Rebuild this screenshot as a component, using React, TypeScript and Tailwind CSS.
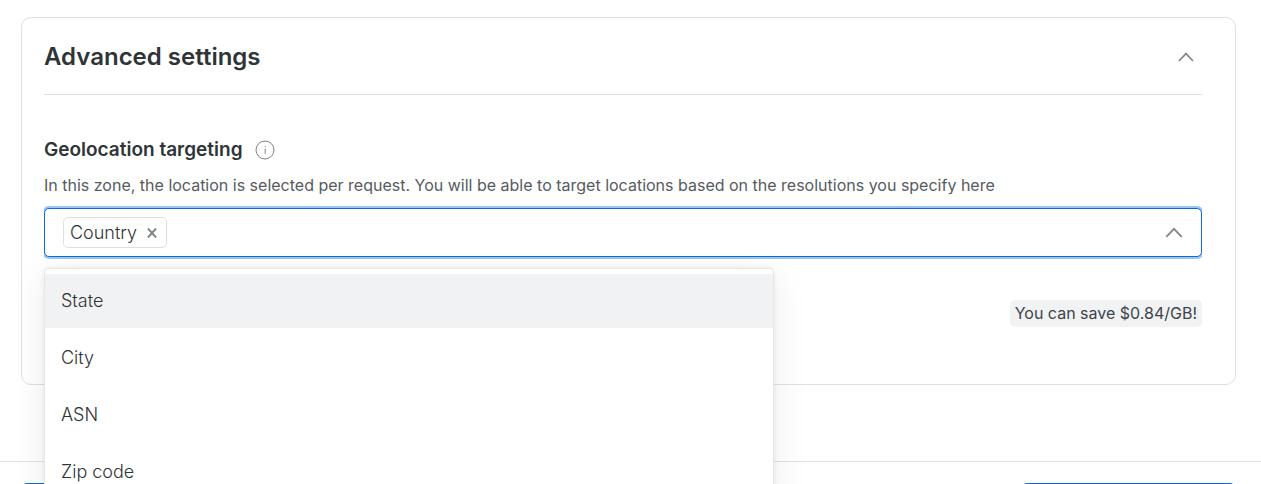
import React, { useState } from 'react';

const OPTIONS = ['State', 'City', 'ASN', 'Zip code'];

const Caret = ({ className }: { className: string }) => (
  <svg viewBox="0 0 16 10" fill="none" stroke="currentColor" className={className} aria-hidden="true">
    <path d="M1 9 8 1.6 15 9" strokeWidth="1.7" />
  </svg>
);

export default function App() {
  const [selected, setSelected] = useState<string[]>(['Country']);
  const [active, setActive] = useState('State');

  return (
    <div className="h-screen overflow-hidden bg-white pt-[17px] font-[Inter,sans-serif] text-[#2f3437]">
      <section className="ml-[21px] mr-[25px] rounded-[10px] border border-[#dfe0e2] pb-[57px] pl-[22px] pr-[33px]">
        <header className="flex items-center justify-between border-b border-[#dfe0e2] pb-[21px] pr-2 pt-[23px]">
          <h2 className="text-2xl font-semibold">Advanced settings</h2>
          <button type="button" aria-label="Collapse advanced settings" className="text-[#82878b]">
            <Caret className="h-[10px] w-4" />
          </button>
        </header>

        <div className="mt-[41px] flex items-center gap-3">
          <label htmlFor="geo" className="text-[19px] leading-7 font-semibold">Geolocation targeting</label>
          <button type="button" aria-label="About geolocation targeting" className="text-[#7c8185]">
            <svg viewBox="0 0 20 20" fill="none" stroke="currentColor" className="size-5" aria-hidden="true">
              <circle cx="10" cy="10" r="9" />
              <path d="M10.2 8.6v5.2" />
              <circle cx="10.2" cy="6.6" r=".7" fill="currentColor" stroke="none" />
            </svg>
          </button>
        </div>
        <p className="mt-[9px] text-base text-[#565b5f]">
          In this zone, the location is selected per request. You will be able to target locations based on the resolutions you specify here
        </p>

        <div className="relative mt-[11px]">
          <div className="overflow-x-clip">
            <div className="flex h-[49px] items-center gap-2 rounded-[5px] border border-[#0a6cdb] bg-white px-[18px] shadow-[0_0_0_2px_#9cc5f3]">
              {selected.map((name) => (
                <span key={name} className="flex h-[31px] items-center gap-[10px] rounded-[5px] border border-[#dfe0e2] pl-[6px] pr-[9px] text-lg font-light">
                  {name}
                  <button
                    type="button"
                    aria-label={`Remove ${name}`}
                    className="text-[#80868a]"
                    onClick={() => setSelected(selected.filter((s) => s !== name))}
                  >
                    <svg viewBox="0 0 10 10" stroke="currentColor" strokeWidth="2" className="size-[10px]" aria-hidden="true">
                      <path d="m1 0.5 8 9M9 0.5 1 9.5" />
                    </svg>
                  </button>
                </span>
              ))}
              <input id="geo" role="combobox" aria-expanded="true" aria-controls="geo-options" className="min-w-0 flex-1 text-lg outline-none" />
              <button type="button" aria-label="Close the list" className="text-[#82878b]">
                <Caret className="h-[11px] w-[18px]" />
              </button>
            </div>
          </div>

          {/* Open menu, lies over the rest of the page */}
          <ul
            id="geo-options"
            role="listbox"
            className="absolute left-0 top-full z-10 mt-[11px] flex w-[63%] flex-col gap-[3px] rounded-[5px] border border-[#e6e7e9] bg-white py-[5px] shadow-[0_8px_36px_rgba(0,0,0,0.08),0_0_4px_rgba(0,0,0,0.08)]"
          >
            {OPTIONS.map((name) => (
              <li
                key={name}
                role="option"
                aria-selected={name === active}
                onMouseEnter={() => setActive(name)}
                className={`flex h-[54px] items-center px-4 text-lg font-light ${name === active ? 'bg-[#f1f2f4]' : ''}`}
              >
                {name}
              </li>
            ))}
          </ul>
        </div>

        <div className="mt-[43px] flex justify-end">
          <span className="rounded-[5px] bg-[#f1f2f4] px-[5px] text-base leading-[27px] text-[#3f4447]">You can save $0.84/GB!</span>
        </div>
      </section>

      <footer className="mt-[76px] flex justify-between border-t border-[#dfe0e2] pl-[22px] pr-[26px] pt-[21px]">
        <button type="button" aria-label="Back" className="h-12 w-[213px] rounded-[5px] bg-[#0869d6]" />
        <button type="button" aria-label="Save" className="h-12 w-[213px] rounded-[5px] bg-[#0869d6]" />
      </footer>
    </div>
  );
}
